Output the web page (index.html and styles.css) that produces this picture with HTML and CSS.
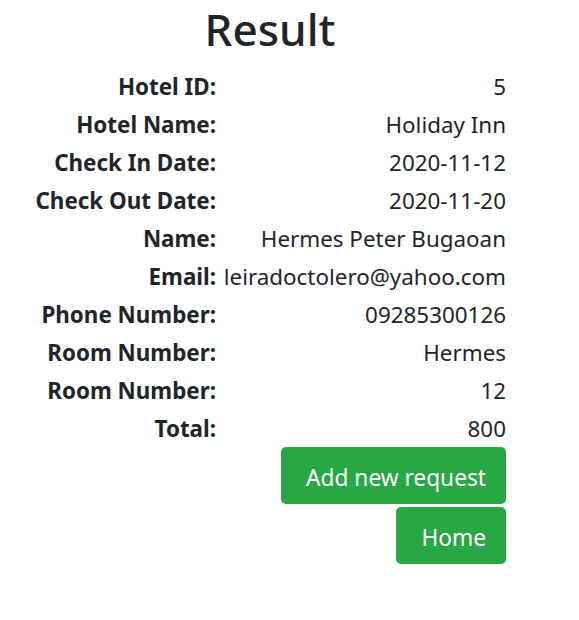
FILE: index.html
```html
<!DOCTYPE html>
<html>
<head>
<meta charset="utf-8">
<link rel="stylesheet" href="styles.css">
</head>
<body>
<div class="wrap">
  <h1 class="title">Result</h1>
  <div class="details">
    <div class="label">Hotel ID:</div><div class="value">5</div>
    <div class="label">Hotel Name:</div><div class="value">Holiday Inn</div>
    <div class="label">Check In Date:</div><div class="value">2020-11-12</div>
    <div class="label">Check Out Date:</div><div class="value">2020-11-20</div>
    <div class="label">Name:</div><div class="value">Hermes Peter Bugaoan</div>
    <div class="label">Email:</div><div class="value">leiradoctolero@yahoo.com</div>
    <div class="label">Phone Number:</div><div class="value">09285300126</div>
    <div class="label">Room Number:</div><div class="value">Hermes</div>
    <div class="label">Room Number:</div><div class="value">12</div>
    <div class="label">Total:</div><div class="value">800</div>
  </div>
  <div class="actions">
    <button class="btn">Add new request</button>
    <button class="btn">Home</button>
  </div>
</div>
</body>
</html>
```
FILE: styles.css
```css
html, body {
  margin: 0;
  padding: 0;
  background: #fff;
}
body {
  font-family: "Noto Sans", "Open Sans", sans-serif;
  color: #212529;
}
.wrap {
  width: 472px;
  margin-left: 34px;
}
.title {
  margin: 0;
  height: 67px;
  padding-top: 0;
  line-height: 58px;
  font-size: 44px;
  font-weight: 500;
  text-align: center;
}
.details {
  display: grid;
  grid-template-columns: 182px 290px;
  grid-auto-rows: 38px;
  align-items: center;
  font-size: 22.4px;
}
.label {
  font-weight: 700;
  text-align: right;
  white-space: nowrap;
}
.value {
  text-align: right;
  white-space: nowrap;
}
.actions {
  display: flex;
  flex-direction: column;
  align-items: flex-end;
  gap: 3px;
}
.btn {
  height: 57px;
  padding: 3px 20px 0 25px;
  border: none;
  border-radius: 5px;
  background: #28a745;
  color: #fff;
  font-family: inherit;
  font-size: 22.7px;
}
```
